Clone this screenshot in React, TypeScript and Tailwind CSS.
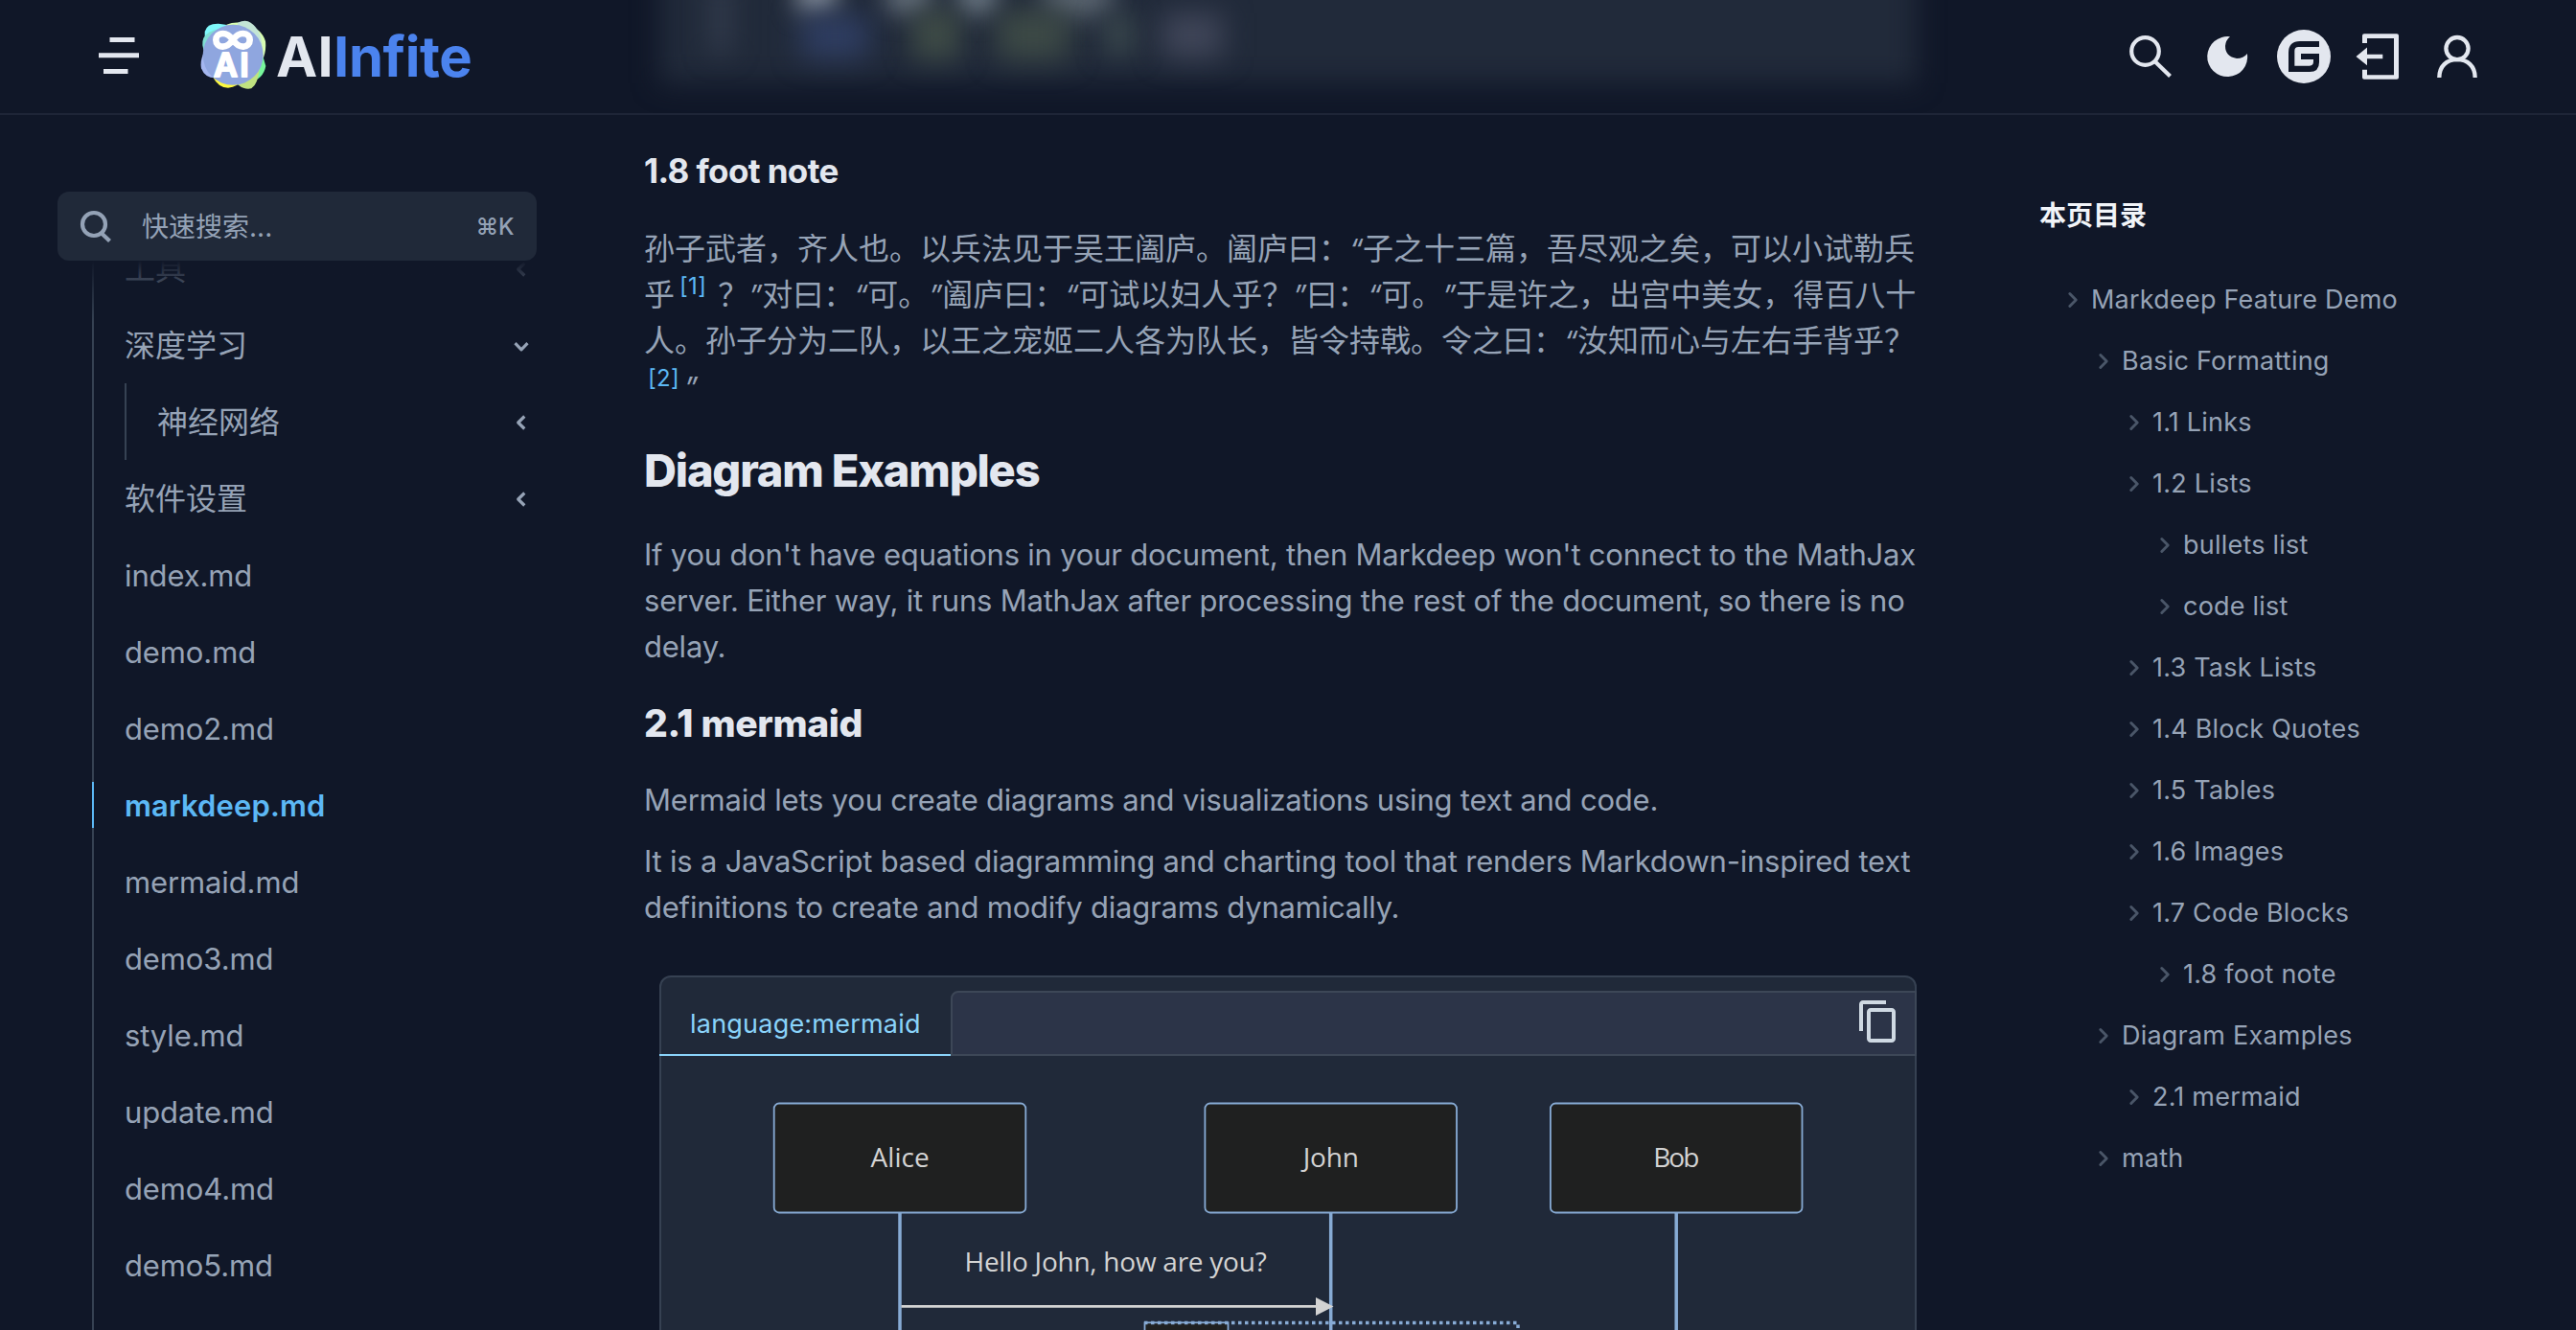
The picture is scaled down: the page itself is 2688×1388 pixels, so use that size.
import type { ReactNode } from 'react';

function Chevron({ dir, className }: { dir: 'left' | 'right' | 'down'; className: string }) {
  const d = {
    left: 'M16.3 5.5 9.7 12l6.6 6.5',
    right: 'M8.5 5l7 7-7 7',
    down: 'M5.5 9.2 12 15.8l6.5-6.6',
  }[dir];
  return (
    <svg viewBox="0 0 24 24" fill="none" stroke="currentColor" className={className}>
      <path d={d} strokeWidth="3.2" strokeLinecap={dir === 'right' ? 'round' : 'butt'} strokeLinejoin="round" />
    </svg>
  );
}

function Logo() {
  return (
    <svg viewBox="448 64 207 218" className="h-[72.7px] w-[69px]">
      <path d="M462 100Q468 74 505 75Q550 78 585 110L520 200L462 150Z" fill="#7ff8fb" />
      <path d="M458 120Q470 98 510 92L540 190L462 165Q450 140 458 120Z" fill="#80ded3" />
      <path d="M530 78Q560 66 590 76Q640 90 652 130Q656 165 640 195L560 180Z" fill="#d8fdb2" />
      <path d="M565 72Q590 60 606 72Q640 95 642 150L560 170Z" fill="#c3e5d6" />
      <path d="M600 260Q645 250 653 208L645 180L590 180Z" fill="#77f69c" />
      <path d="M486 240Q505 276 535 276Q565 272 585 250L540 200Z" fill="#fdf93e" />
      <path d="M560 262Q585 284 608 278Q628 266 634 215L570 180Z" fill="#c0e280" />
      <path d="M462 160Q446 190 451 215Q462 245 495 245L540 200Z" fill="#a4b6ef" />
      <circle cx="550.500" cy="173" r="94.500" fill="#8fa6df" />
      <path
        d="M550 126C540 112 531 106 519 106C505 106 497 115 497 126C497 138 505 147 519 147C531 147 540 140 550 126C560 112 569 106 581 106C595 106 603 115 603 126C603 138 595 147 581 147C569 147 560 140 550 126Z"
        fill="none"
        stroke="#fff"
        strokeWidth="20"
      />
      <text
        x="490"
        y="240"
        textLength="110"
        fontFamily="Inter, sans-serif"
        fontSize="103"
        fontWeight="600"
        fill="#fff"
        stroke="#fff"
        strokeWidth="6"
        strokeLinejoin="round"
      >
        AI
      </text>
    </svg>
  );
}

function Header() {
  return (
    <header className="relative flex h-[120px] items-center overflow-hidden border-b-2 border-[#1e2537] text-[#e3e7ef]">
      {/* Code block scrolled beneath the frosted bar */}
      <div className="absolute -top-[60px] left-[688px] h-[147px] w-[1312px] bg-[#212a3a] blur-[14px]" />
      <div className="absolute -top-[20px] left-[742px] h-[76px] w-[20px] bg-[#343d4e] blur-[14px]" />
      <div className="absolute -top-[22px] left-[832px] h-[34px] w-[40px] bg-[#8b95a2] blur-[13px]" />
      <div className="absolute -top-[22px] left-[925px] h-[36px] w-[46px] bg-[#66717d] blur-[13px]" />
      <div className="absolute -top-[22px] left-[1000px] h-[36px] w-[40px] bg-[#6f7c88] blur-[13px]" />
      <div className="absolute -top-[22px] left-[1090px] h-[38px] w-[70px] bg-[#5f6a75] blur-[14px]" />
      <div className="absolute top-[16px] left-[836px] h-[44px] w-[70px] bg-[#2f3e63] blur-[15px]" />
      <div className="absolute top-[10px] left-[952px] h-[52px] w-[50px] bg-[#3e4b46] blur-[14px]" />
      <div className="absolute top-[10px] left-[1040px] h-[52px] w-[76px] bg-[#3d4a46] blur-[15px]" />
      <div className="absolute top-[14px] left-[1150px] h-[44px] w-[36px] bg-[#36434a] blur-[13px]" />
      <div className="absolute top-[14px] left-[1212px] h-[46px] w-[64px] bg-[#404659] blur-[15px]" />

      <div className="relative flex h-full w-full items-center pr-[100px] pl-[103px]">
        <svg viewBox="0 0 42 42" className="size-[42px] -translate-y-[1px]" fill="currentColor">
          <path d="M11.500 2h26v5h-26zM0 18.300h42v5H0zM5 35h25.500v5H5z" />
        </svg>
        <div className="ml-[64px] -mt-[3px]">
          <Logo />
        </div>
        <div className="-mt-[1px] ml-[10px] text-[58px] leading-[72px] font-bold">
          <span className="tracking-[0.2px]">AI</span>
          <span className="tracking-[-0.4px] text-[#4b83ee]">Infite</span>
        </div>
        <div className="ml-auto flex h-[60px] items-center">
          <svg viewBox="2220 28 60 60" className="size-[60px]" fill="none" stroke="currentColor" strokeWidth="4.200">
            <circle cx="2238.500" cy="52.500" r="14.300" />
            <path d="M2248.500 63 2264.500 78.500" />
          </svg>
          <svg viewBox="2294 28 60 60" className="ml-[14px] size-[60px]" fill="currentColor">
            <path d="M2327 37.300A21 21 0 1 0 2345 55Q2341 60 2334 60Q2322 58 2322 47Q2322.500 41 2327 37.300Z" />
          </svg>
          <svg viewBox="2374 28 60 60" className="ml-[20px] size-[60px]">
            <circle cx="2404" cy="58" r="28" fill="currentColor" />
            <path
              transform="translate(2180 0) scale(.33333)"
              d="M720 126H660Q624 126 624 162V222H690Q720 222 720 192V165H663V183H702V190Q702 203 690 203H643V156Q643 144 655 144H720Z"
              fill="#101728"
            />
          </svg>
          <svg viewBox="2450 28 60 60" className="ml-[16px] size-[60px]" fill="currentColor">
            <path d="M2467 34.300h34q2 0 2 2v43.400q0 2-2 2h-34q-2 0-2-2v-8h5v5.500h28v-38.200h-28v5h-5v-7.700q0-2 2-2z" />
            <path d="M2458.500 58 2470 48.500v7.300h16.300v4.500H2470v7z" />
          </svg>
          <svg viewBox="2534 28 60 60" className="-mr-[6px] ml-[24px] size-[60px]" fill="none" stroke="currentColor" strokeWidth="4.300">
            <circle cx="2564" cy="49.600" r="11.600" />
            <path d="M2545.300 80C2545.300 68 2553 61.200 2564 61.200S2582.700 68 2582.700 80" />
          </svg>
        </div>
      </div>
    </header>
  );
}

function Row({ children, chevron }: { children: ReactNode; chevron?: 'left' | 'down' }) {
  return (
    <div className="flex h-20 items-center justify-between pt-[2px] pr-[4px] pl-8">
      <span>{children}</span>
      {chevron && <Chevron dir={chevron} className={chevron === 'left' ? 'mr-[1px] size-6' : 'size-6'} />}
    </div>
  );
}

function Cjk({ children }: { children: ReactNode }) {
  return <span className="text-[32px] tracking-normal">{children}</span>;
}

function Sidebar() {
  return (
    <aside className="ml-[60px] flex w-[500px] flex-col pt-20">
      <div className="relative z-10 flex h-[72px] shrink-0 items-center rounded-xl bg-[#202939] pr-6 pl-[23px] text-[#94a2b6]">
        <svg viewBox="0 0 34 34" className="size-[34px]" fill="none" stroke="currentColor" strokeWidth="4.200">
          <circle cx="15" cy="15" r="12" />
          <path d="M22.500 24 31.500 32.500" />
        </svg>
        <span className="mt-[2px] ml-[31px] text-[28px]">快速搜索...</span>
        <span className="mt-[1px] ml-auto text-[24px] font-medium tracking-[-0.4px]">⌘K</span>
      </div>
      <nav className="relative min-h-0 flex-1 overflow-hidden text-[31px] tracking-[-0.12px] text-[#96a3b6]">
        <div className="-mt-8 ml-9 border-l-2 border-[#364253]">
          <Row chevron="left"><Cjk>工具</Cjk></Row>
          <Row chevron="down"><Cjk>深度学习</Cjk></Row>
          <div className="ml-8 border-l-2 border-[#364253]">
            <Row chevron="left"><Cjk>神经网络</Cjk></Row>
          </div>
          <Row chevron="left"><Cjk>软件设置</Cjk></Row>
          <Row>index.md</Row>
          <Row>demo.md</Row>
          <Row>demo2.md</Row>
          <div className="py-4">
            <div className="-ml-[2px] h-12 border-l-2 border-[#5cb8f5] pl-8 leading-[50px] font-semibold tracking-[0.15px] text-[#5cb8f5]">
              markdeep.md
            </div>
          </div>
          <Row>mermaid.md</Row>
          <Row>demo3.md</Row>
          <Row>style.md</Row>
          <Row>update.md</Row>
          <Row>demo4.md</Row>
          <Row>demo5.md</Row>
          <div className="h-20" />
        </div>
        <div className="absolute inset-x-0 top-0 h-16 bg-linear-to-b from-[#101728] to-[#101728]/0" />
      </nav>
    </aside>
  );
}

function Quote({ children }: { children: string }) {
  return <span className="inline-block w-[14px] text-center font-['Inter'] text-[30px] leading-none italic">{children}</span>;
}

function Note({ n }: { n: number }) {
  return (
    <span className="relative -top-[12px] inline-block text-[24px] leading-none tracking-[0.3px] text-[#5cb8f5]">[{n}]</span>
  );
}

function Diagram() {
  const actors = [
    { name: 'Alice', x: 939, w: 61 },
    { name: 'John', x: 1388.7, w: 58 },
    { name: 'Bob', x: 1749.2, w: 48 },
  ];
  return (
    <svg viewBox="690 1102 1308 286" className="h-[286px] w-[1308px]" fontFamily="'Open Sans', sans-serif" fontSize="28">
      {actors.map((a) => (
        <g key={a.name}>
          <path d={`M${a.x} 1266V1400`} stroke="#87abd5" strokeWidth="3.500" />
          <rect x={a.x - 131.3} y="1151.500" width="262.600" height="114" rx="5.300" fill="#1f2020" stroke="#87abd5" strokeWidth="1.800" />
          <text x={a.x} y="1218" textAnchor="middle" textLength={a.w} fill="#d3d3d3">{a.name}</text>
        </g>
      ))}
      <text x="1006.500" y="1327" textLength="315" fill="#d3d3d3">Hello John, how are you?</text>
      <path d="M940.500 1363.400H1374" stroke="#d3d3d3" strokeWidth="2.800" />
      <path d="M1373 1354 1391.500 1363.600 1373 1373Z" fill="#d3d3d3" />
      <rect x="1194.500" y="1380.300" width="87" height="40" fill="#1f2020" stroke="#87abd5" strokeWidth="1.800" />
      <path d="M1194 1380.500H1584V1400" fill="none" stroke="#87abd5" strokeWidth="3.500" strokeDasharray="3.500 3.500" />
    </svg>
  );
}

function Article() {
  return (
    <main className="ml-[112px] w-[1328px] pt-[34px] text-[31px] leading-[48px] tracking-[-0.216px] whitespace-nowrap text-[#96a3b6]">
      <h3 className="text-[35px] leading-[48px] font-bold tracking-[-0.6px] text-[#e3e7ef]">1.8 foot note</h3>
      <div className="mt-[34px] text-[32px] tracking-normal">
        <p className="h-12">孙子武者，齐人也。以兵法见于吴王阖庐。阖庐曰：<Quote>“</Quote>子之十三篇，吾尽观之矣，可以小试勒兵</p>
        <p className="h-12">
          乎<span className="mr-[12px] ml-[5px]"><Note n={1} /></span>？<Quote>”</Quote>对曰：<Quote>“</Quote>可。<Quote>”</Quote>阖庐曰：<Quote>“</Quote>可试以妇人乎？<Quote>”</Quote>曰：<Quote>“</Quote>可。<Quote>”</Quote>于是许之，出宫中美女，得百八十
        </p>
        <p className="h-12">人。孙子分为二队，以王之宠姬二人各为队长，皆令持戟。令之曰：<Quote>“</Quote>汝知而心与左右手背乎？</p>
        <p className="h-12"><span className="mr-[5px] ml-[4px]"><Note n={2} /></span><Quote>”</Quote></p>
      </div>
      <h2 className="mt-[39px] text-[47px] leading-[48px] font-extrabold tracking-[-1.19px] text-[#e3e7ef]">Diagram Examples</h2>
      <p className="mt-10">
        If you don't have equations in your document, then Markdeep won't connect to the MathJax
        <br />
        server. Either way, it runs MathJax after processing the rest of the document, so there is no
        <br />
        delay.
      </p>
      <h3 className="mt-8 text-[39px] leading-[48px] font-extrabold tracking-[-0.35px] text-[#e3e7ef]">2.1 mermaid</h3>
      <p className="mt-8">Mermaid lets you create diagrams and visualizations using text and code.</p>
      <p className="mt-4">
        It is a JavaScript based diagramming and charting tool that renders Markdown-inspired text
        <br />
        definitions to create and modify diagrams dynamically.
      </p>
      <section className="mt-[47px] ml-4 h-[400px] rounded-t-xl border-2 border-[#364152] bg-[#202939]">
        <div className="-mx-[2px] flex h-[82px]">
          <div className="w-[304px] border-b-2 border-[#8ad3fa] pt-[25px] pl-[32px] text-[27px] tracking-[0.217px] text-[#8ad3fa]">language:mermaid</div>
          <div className="mt-[14px] flex flex-1 justify-end rounded-tl-lg border-2 border-[#3d4757] bg-[#2c3448] pt-[6px] pr-[14px]">
            <svg viewBox="0 0 24 24" className="size-12" fill="#cfd9e3">
              <path d="M16 1H4c-1.100 0-2 .9-2 2v14h2V3h12V1zm3 4H8c-1.100 0-2 .9-2 2v14c0 1.100.9 2 2 2h11c1.100 0 2-.9 2-2V7c0-1.100-.9-2-2-2zm0 16H8V7h11v14z" />
            </svg>
          </div>
        </div>
        <Diagram />
      </section>
    </main>
  );
}

const toc: [string, string][] = [
  ['Markdeep Feature Demo', 'pl-[24px]'],
  ['Basic Formatting', 'pl-[56px]'],
  ['1.1 Links', 'pl-[88px]'],
  ['1.2 Lists', 'pl-[88px]'],
  ['bullets list', 'pl-[120px]'],
  ['code list', 'pl-[120px]'],
  ['1.3 Task Lists', 'pl-[88px]'],
  ['1.4 Block Quotes', 'pl-[88px]'],
  ['1.5 Tables', 'pl-[88px]'],
  ['1.6 Images', 'pl-[88px]'],
  ['1.7 Code Blocks', 'pl-[88px]'],
  ['1.8 foot note', 'pl-[120px]'],
  ['Diagram Examples', 'pl-[56px]'],
  ['2.1 mermaid', 'pl-[88px]'],
  ['math', 'pl-[56px]'],
];

function Toc() {
  return (
    <aside className="ml-32 pt-[85px] whitespace-nowrap">
      <h5 className="text-[28px] leading-10 font-semibold text-[#f1f4f8]">本页目录</h5>
      <ul className="mt-9 text-[27px] tracking-[0.217px] text-[#96a3b6]">
        {toc.map(([label, indent]) => (
          <li key={label} className={`flex h-16 items-center ${indent}`}>
            <Chevron dir="right" className="mr-[8px] size-[22px] text-[#4a5668]" />
            {label}
          </li>
        ))}
      </ul>
    </aside>
  );
}

export default function App() {
  return (
    <div lang="zh-CN" className="flex h-[1388px] w-[2688px] flex-col overflow-hidden bg-[#101728] font-['Inter','Noto_Sans_CJK_SC',sans-serif]">
      <Header />
      <div className="flex min-h-0 flex-1">
        <Sidebar />
        <Article />
        <Toc />
      </div>
    </div>
  );
}
